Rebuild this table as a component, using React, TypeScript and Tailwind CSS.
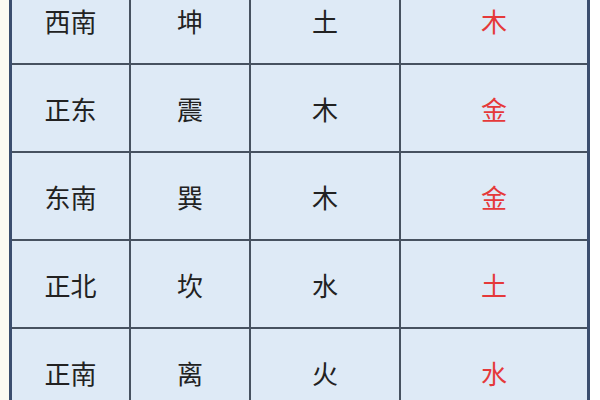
const ROWS = [
  ['西南', '坤', '土', '木'],
  ['正东', '震', '木', '金'],
  ['东南', '巽', '木', '金'],
  ['正北', '坎', '水', '土'],
  ['正南', '离', '火', '水'],
];

export default function App() {
  return (
    <div
      className="w-[600px] h-[400px] overflow-hidden bg-white flex"
      style={{ fontFamily: '"Noto Sans CJK SC", "Noto Sans", sans-serif' }}
    >
      <div className="w-[9px] shrink-0 bg-[#fcfaf2]" />
      <div className="w-[581px] shrink-0 -mt-[23px] border-x-[3px] border-[#3b4e6e] bg-[#deeaf6]">
        {ROWS.map((row, i) => (
          <div key={i} className="grid grid-cols-[119px_120px_150px_186px] h-[88px] border-b-2 border-[#475260]">
            {row.map((cell, j) => (
              <div
                key={j}
                className={`flex items-center justify-center text-[26px] ${j < 3 ? 'border-r-2 border-[#475260] text-[#222]' : 'text-[#e5393a]'}`}
              >
                {cell}
              </div>
            ))}
          </div>
        ))}
      </div>
    </div>
  );
}
